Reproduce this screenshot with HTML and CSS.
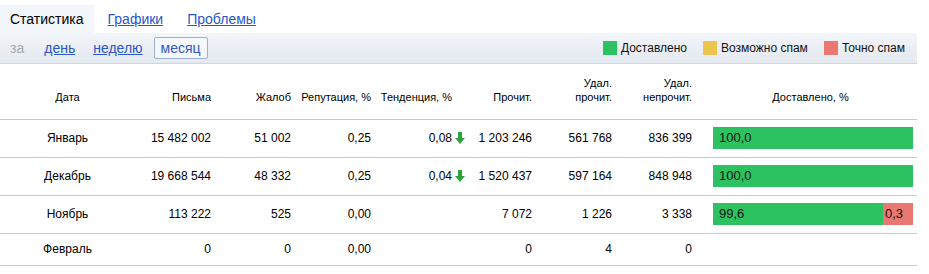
FILE: index.html
```html
<!DOCTYPE html>
<html lang="ru">

<head>
    <meta charset="UTF-8">
    <title>Статистика</title>
    <link rel="stylesheet" href="styles.css">
</head>

<body>
    <div class="page">
        <ul class="tabs">
            <li class="active">Статистика</li>
            <li><a href="#">Графики</a></li>
            <li><a href="#">Проблемы</a></li>
        </ul>

        <div class="filter">
            <div class="periods">
                <span class="label">за</span>
                <a href="#" class="period">день</a>
                <a href="#" class="period">неделю</a>
                <a href="#" class="period current">месяц</a>
            </div>
            <ul class="legend">
                <li><i class="sq green"></i>Доставлено</li>
                <li><i class="sq yellow"></i>Возможно спам</li>
                <li><i class="sq red"></i>Точно спам</li>
            </ul>
        </div>

        <table class="stats">
            <colgroup>
                <col style="width:135px">
                <col style="width:84px">
                <col style="width:80px">
                <col style="width:80px">
                <col style="width:81px">
                <col style="width:80px">
                <col style="width:80px">
                <col style="width:80px">
                <col>
            </colgroup>
            <thead>
                <tr>
                    <th class="c">Дата</th>
                    <th>Письма</th>
                    <th>Жалоб</th>
                    <th>Репутация, %</th>
                    <th>Тенденция, %</th>
                    <th>Прочит.</th>
                    <th>Удал.<br>прочит.</th>
                    <th>Удал.<br>непрочит.</th>
                    <th class="c delivered">Доставлено, %</th>
                </tr>
            </thead>
            <tbody>
                <tr>
                    <td class="c">Январь</td>
                    <td>15 482 002</td>
                    <td>51 002</td>
                    <td>0,25</td>
                    <td>0,08<svg class="down" width="10" height="12" viewBox="0 0 10 12"><path d="M3 0h4v6h3l-5 6-5-6h3z"/></svg></td>
                    <td>1 203 246</td>
                    <td>561 768</td>
                    <td>836 399</td>
                    <td class="delivered">
                        <div class="bar"><span class="ok">100,0</span></div>
                    </td>
                </tr>
                <tr>
                    <td class="c">Декабрь</td>
                    <td>19 668 544</td>
                    <td>48 332</td>
                    <td>0,25</td>
                    <td>0,04<svg class="down" width="10" height="12" viewBox="0 0 10 12"><path d="M3 0h4v6h3l-5 6-5-6h3z"/></svg></td>
                    <td>1 520 437</td>
                    <td>597 164</td>
                    <td>848 948</td>
                    <td class="delivered">
                        <div class="bar"><span class="ok">100,0</span></div>
                    </td>
                </tr>
                <tr>
                    <td class="c">Ноябрь</td>
                    <td>113 222</td>
                    <td>525</td>
                    <td>0,00</td>
                    <td></td>
                    <td>7 072</td>
                    <td>1 226</td>
                    <td>3 338</td>
                    <td class="delivered">
                        <div class="bar"><span class="ok">99,6</span><span class="spam" style="width:30px">0,3</span></div>
                    </td>
                </tr>
                <tr>
                    <td class="c">Февраль</td>
                    <td>0</td>
                    <td>0</td>
                    <td>0,00</td>
                    <td></td>
                    <td>0</td>
                    <td>4</td>
                    <td>0</td>
                    <td class="delivered"></td>
                </tr>
            </tbody>
        </table>
    </div>
</body>

</html>
```

FILE: styles.css
```css
* {
    margin: 0;
    padding: 0;
    box-sizing: border-box;
}

body {
    font-family: 'Liberation Sans', Arial, sans-serif;
    color: #000;
    background: #fff;
}

a {
    color: #2a56c6;
}

.page {
    width: 917px;
}

/* tabs */

.tabs {
    display: flex;
    gap: 4px;
    height: 33px;
    padding-top: 5px;
    list-style: none;
    font-size: 14px;
}

.tabs li {
    padding: 0 10px;
    line-height: 28px;
}

.tabs li.active {
    background: #f2f5f9;
}

/* period filter + legend */

.filter {
    display: flex;
    align-items: center;
    justify-content: space-between;
    height: 31px;
    padding: 0 12px 0 10px;
    background: linear-gradient(#f2f5f9, #e4e9f0);
    border-bottom: 1px solid #d2d6dc;
}

.periods {
    display: flex;
    align-items: center;
    gap: 4px;
    font-size: 14px;
}

.periods .label {
    color: #a8a8a8;
    margin-right: 9px;
}

.period {
    padding: 0 6px;
    line-height: 20px;
    border: 1px solid transparent;
    border-radius: 2px;
}

.period.current {
    text-decoration: none;
    color: #3656c4;
    border-color: #9db0cc;
    background: #f4f7fb;
}

.legend {
    display: flex;
    gap: 16px;
    list-style: none;
    font-size: 12px;
    color: #111;
}

.legend li {
    display: flex;
    align-items: center;
}

.sq {
    display: inline-block;
    width: 14px;
    height: 14px;
    margin-right: 4px;
}

.green {
    background: #2dc261;
}

.yellow {
    background: #ecc64c;
}

.red {
    background: #e97873;
}

/* table */

.stats {
    width: 917px;
    table-layout: fixed;
    border-collapse: collapse;
}

.stats th {
    height: 55px;
    padding: 0 8px 15px 0;
    font-size: 11px;
    font-weight: normal;
    line-height: 14px;
    text-align: right;
    vertical-align: bottom;
    white-space: nowrap;
    border-bottom: 1px solid #c8c8c8;
}

.stats td {
    padding: 7px 8px 8px;
    font-size: 12px;
    line-height: 16px;
    text-align: right;
    white-space: nowrap;
    border-bottom: 1px solid #c8c8c8;
}

.stats .c {
    text-align: center;
}

.stats th.c {
    padding-left: 8px;
}

.stats .delivered {
    padding-left: 13px;
    padding-right: 4px;
}

.down {
    fill: #2ea33d;
    margin-left: 3px;
    margin-right: -13px;
    vertical-align: -2px;
}

.bar {
    display: flex;
    width: 200px;
    height: 22px;
    font-size: 13px;
    line-height: 22px;
    color: #111;
    text-align: left;
}

.bar .ok {
    flex: 1;
    padding-left: 6px;
    background: #2dc261;
}

.bar .spam {
    padding-left: 2px;
    background: #e97873;
}
```
